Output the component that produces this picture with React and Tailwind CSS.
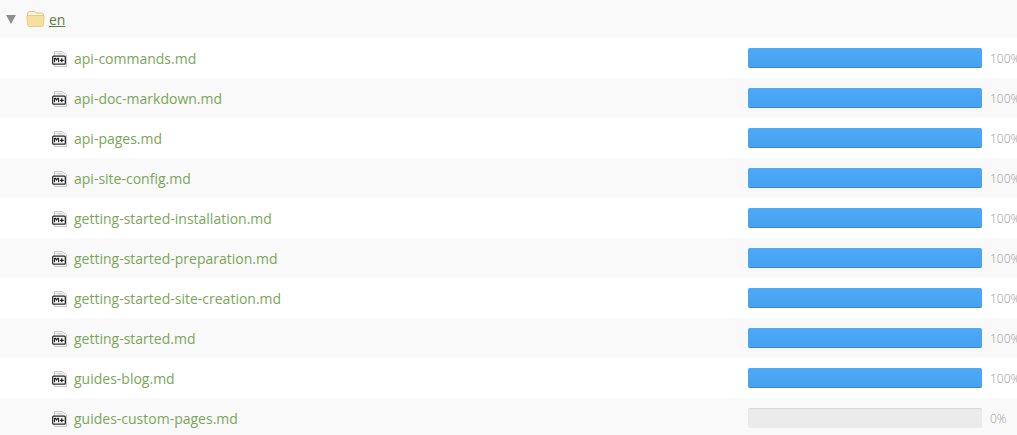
import React from "react";

const files = [
  { name: "api-commands.md", pct: 100 },
  { name: "api-doc-markdown.md", pct: 100 },
  { name: "api-pages.md", pct: 100 },
  { name: "api-site-config.md", pct: 100 },
  { name: "getting-started-installation.md", pct: 100 },
  { name: "getting-started-preparation.md", pct: 100 },
  { name: "getting-started-site-creation.md", pct: 100 },
  { name: "getting-started.md", pct: 100 },
  { name: "guides-blog.md", pct: 100 },
  { name: "guides-custom-pages.md", pct: 0 },
];

const FolderIcon = () => (
  <svg width="19" height="18" viewBox="0 0 19 18" className="block shrink-0">
    <path d="M1.5 4 Q1.5 1.5 4 1.5 L8 1.5 Q9.5 1.5 10 3 L15.5 3 Q17.5 3 17.5 5 L17.5 6 L1.5 6 Z" fill="#fbf3dc" stroke="#dcc88c" />
    <path d="M1 6.5 Q1 5.5 2.5 5.5 L16.5 5.5 Q18 5.5 18 7 L17.5 14.5 Q17.5 16.5 15.5 16.5 L3.5 16.5 Q1.5 16.5 1.5 14.5 Z" fill="#f6e09f" stroke="#e3cd88" />
  </svg>
);

const MdIcon = () => (
  <svg width="15" height="16" viewBox="0 0 15 16" className="mt-[2px] shrink-0">
    <path d="M2.5 .5 H10 L14.5 4 V15.5 H2.5 Z" fill="#f7f7f7" stroke="#c8c8c8" />
    <path d="M4.5 2.5 H10 M4.5 4 H12" stroke="#d4d4d4" />
    <rect x="0.7" y="5.2" width="12.6" height="8" rx="1" fill="#fff" stroke="#2b2b2b" strokeWidth="1.3" />
    <path d="M2.6 11.2 V7.4 H3.6 L4.6 9 L5.6 7.4 H6.6 V11.2" fill="none" stroke="#1f1f1f" strokeWidth="1.1" />
    <path d="M9.8 7.3 V11.3 M7.9 9.3 H11.7" stroke="#1f1f1f" strokeWidth="1.3" />
  </svg>
);

const FileRow = ({ file, odd }) => (
  <div className={`flex h-10 items-center ${odd ? "bg-white" : "bg-[#f9f9f9]"}`}>
    <div className="flex w-[748px] shrink-0 items-center gap-[7px] pl-[52px]">
      <MdIcon />
      <a className="text-[14px] text-[#7ba65a]">{file.name}</a>
    </div>
    <div className="h-5 w-[234px] shrink-0 rounded-[2px] bg-[#ebebeb] shadow-[inset_0_1px_1px_rgba(0,0,0,0.08)]">
      {file.pct > 0 && (
        <div
          className="h-full rounded-[2px] border-b border-[#3a88cc] bg-gradient-to-b from-[#4da8f8] to-[#48a2f2]"
          style={{ width: `${file.pct}%` }}
        />
      )}
    </div>
    <span className="mt-[2px] ml-2 text-[12px] font-light whitespace-nowrap text-[#999999]">{file.pct}%</span>
  </div>
);

export default function App() {
  return (
    <div className="h-[435px] w-[1017px] overflow-hidden bg-white font-['Open_Sans',sans-serif]">
      <div className="flex h-[38px] items-center bg-[#f9f9f9]">
        <span className="ml-[6px] h-0 w-0 border-x-[5px] border-t-[9px] border-x-transparent border-t-[#8f8f8f]" />
        <span className="ml-[10px]">
          <FolderIcon />
        </span>
        <a className="ml-[4px] text-[14px] text-[#5a7f40] underline">en</a>
      </div>
      {files.map((file, i) => (
        <FileRow key={file.name} file={file} odd={i % 2 === 0} />
      ))}
    </div>
  );
}
